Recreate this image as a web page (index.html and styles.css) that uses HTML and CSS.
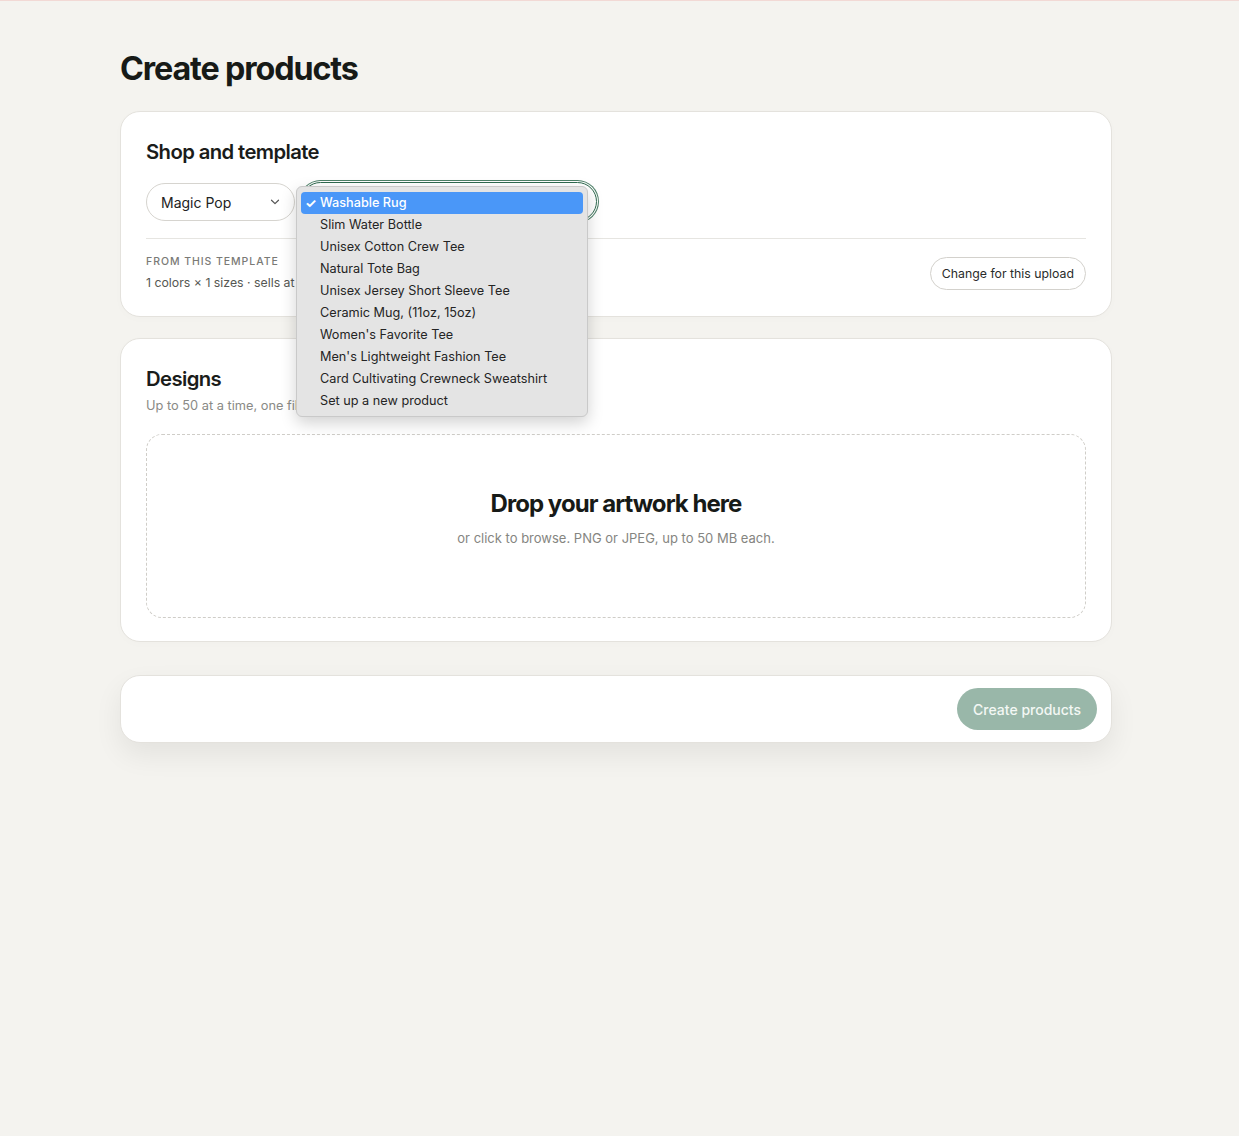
FILE: index.html
```html
<!DOCTYPE html>
<html lang="en">
<head>
<meta charset="utf-8">
<title>Create products</title>
<link rel="stylesheet" href="styles.css">
</head>
<body>
<div class="topline"></div>
<main class="page">
  <h1 class="title">Create products</h1>

  <section class="card">
    <h2 class="card-title">Shop and template</h2>
    <div class="selects">
      <div class="select shop">
        <span>Magic Pop</span>
        <svg class="chev" width="10" height="6" viewBox="0 0 10 6"><path d="M1.5 1.2 5 4.6 8.5 1.2" fill="none" stroke="#555" stroke-width="1.2" stroke-linecap="round" stroke-linejoin="round"/></svg>
      </div>
      <div class="select-wrap">
        <div class="select template focused" aria-label="Washable Rug"></div>
        <ul class="menu">
          <li class="active"><span class="check">✓</span>Washable Rug</li>
          <li>Slim Water Bottle</li>
          <li>Unisex Cotton Crew Tee</li>
          <li>Natural Tote Bag</li>
          <li>Unisex Jersey Short Sleeve Tee</li>
          <li>Ceramic Mug, (11oz, 15oz)</li>
          <li>Women's Favorite Tee</li>
          <li>Men's Lightweight Fashion Tee</li>
          <li>Card Cultivating Crewneck Sweatshirt</li>
          <li>Set up a new product</li>
        </ul>
      </div>
    </div>
    <div class="divider"></div>
    <div class="template-row">
      <div class="template-info">
        <div class="label">From this template</div>
        <div class="details">1 colors × 1 sizes · sells at $42.00</div>
      </div>
      <button class="btn-outline">Change for this upload</button>
    </div>
  </section>

  <section class="card">
    <h2 class="card-title">Designs</h2>
    <p class="sub">Up to 50 at a time, one file per design.</p>
    <div class="dropzone">
      <div class="drop-title">Drop your artwork here</div>
      <div class="drop-sub">or click to browse. PNG or JPEG, up to 50 MB each.</div>
    </div>
  </section>

  <section class="card footer-card">
    <button class="btn-primary">Create products</button>
  </section>
</main>
</body>
</html>
```

FILE: styles.css
```css
* { box-sizing: border-box; }
html, body { margin: 0; padding: 0; }
body {
  background: #f4f3ef;
  font-family: "Inter", "Liberation Sans", sans-serif;
  color: #1c1e1c;
  min-height: 1136px;
}
.topline { height: 1px; background: #f2d9d5; }
.page {
  width: 992px;
  margin-left: 120px;
  padding-top: 48px;
}
.title {
  margin: 0 0 22px;
  font-size: 32.3px;
  line-height: 40px;
  font-weight: 700;
  letter-spacing: -0.035em;
  color: #171a17;
}
.card {
  background: #fff;
  border: 1px solid #e4e2dd;
  border-radius: 20px;
  padding: 26px 25px 23px;
  margin-bottom: 21px;
  box-shadow: 0 2px 10px rgba(0,0,0,0.015);
}
.card-title {
  margin: 0;
  font-size: 20.3px;
  line-height: 28px;
  font-weight: 600;
  letter-spacing: -0.03em;
  color: #1a1c1a;
}
.selects {
  display: flex;
  gap: 6px;
  margin-top: 16px;
  height: 39px;
}
.select {
  height: 38px;
  border: 1px solid #d6d4cf;
  border-radius: 19px;
  display: flex;
  align-items: center;
  padding: 0 14px;
  font-size: 14px;
  color: #222;
  background: #fff;
}
.shop { width: 149px; justify-content: space-between; margin-top: 1px; }
.select-wrap { position: relative; }
.template {
  width: 296px;
  height: 39px;
  border: 1px solid #2e6a4f;
  border-radius: 20px;
  box-shadow: 0 0 0 1px #fff, 0 0 0 2px #4d8068;
}
.menu {
  position: absolute;
  left: -5px;
  top: 4px;
  width: 292px;
  margin: 0;
  padding: 5px 4px 4px;
  list-style: none;
  background: #e4e4e4;
  border: 1px solid #c9c9c9;
  border-radius: 6px;
  box-shadow: 0 6px 16px rgba(0,0,0,0.18);
  font-family: "Inter", "Liberation Sans", sans-serif;
  font-size: 12.7px;
  z-index: 5;
}
.menu li {
  height: 22px;
  line-height: 22px;
  padding-left: 19px;
  color: #242424;
  border-radius: 4px;
  position: relative;
  white-space: nowrap;
}
.menu li.active {
  background: #4a97f8;
  color: #fff;
  font-weight: 500;
}
.check {
  position: absolute;
  left: 4px;
  top: 0;
  font-size: 13px;
  font-weight: 700;
}
.divider {
  height: 1px;
  background: #e6e5e1;
  margin-top: 17px;
}
.template-row {
  display: flex;
  align-items: center;
  justify-content: space-between;
  margin-top: 15px;
}
.label {
  font-size: 10.5px;
  line-height: 16px;
  letter-spacing: 0.09em;
  text-transform: uppercase;
  color: #7a7a76;
  font-weight: 500;
}
.details {
  margin-top: 3px;
  font-size: 12.3px;
  line-height: 20px;
  color: #555753;
}
.btn-outline {
  font-family: inherit;
  font-size: 12.3px;
  color: #2a2c2a;
  background: #fff;
  border: 1px solid #d3d1cc;
  border-radius: 17px;
  height: 33px;
  padding: 0 11px;
}
.sub {
  margin: 3px 0 0;
  font-size: 12.8px;
  line-height: 20px;
  color: #8a8a86;
}
.dropzone {
  margin-top: 18px;
  height: 184px;
  border: 1px dashed #cfcdc8;
  border-radius: 16px;
  display: flex;
  flex-direction: column;
  align-items: center;
  padding-top: 54px;
}
.drop-title {
  font-size: 24px;
  line-height: 30px;
  font-weight: 700;
  letter-spacing: -0.04em;
  color: #171a17;
}
.drop-sub {
  margin-top: 9px;
  font-size: 13px;
  line-height: 20px;
  color: #858581;
}
.footer-card {
  margin-top: 33px;
  padding: 12px 14px 12px;
  display: flex;
  justify-content: flex-end;
  box-shadow: 0 12px 28px rgba(0,0,0,0.07);
}
.btn-primary {
  font-family: inherit;
  font-size: 14px;
  font-weight: 500;
  color: #f3f7f4;
  background: #99b7a9;
  border: none;
  border-radius: 21px;
  height: 42px;
  padding: 0 16px;
}
```
